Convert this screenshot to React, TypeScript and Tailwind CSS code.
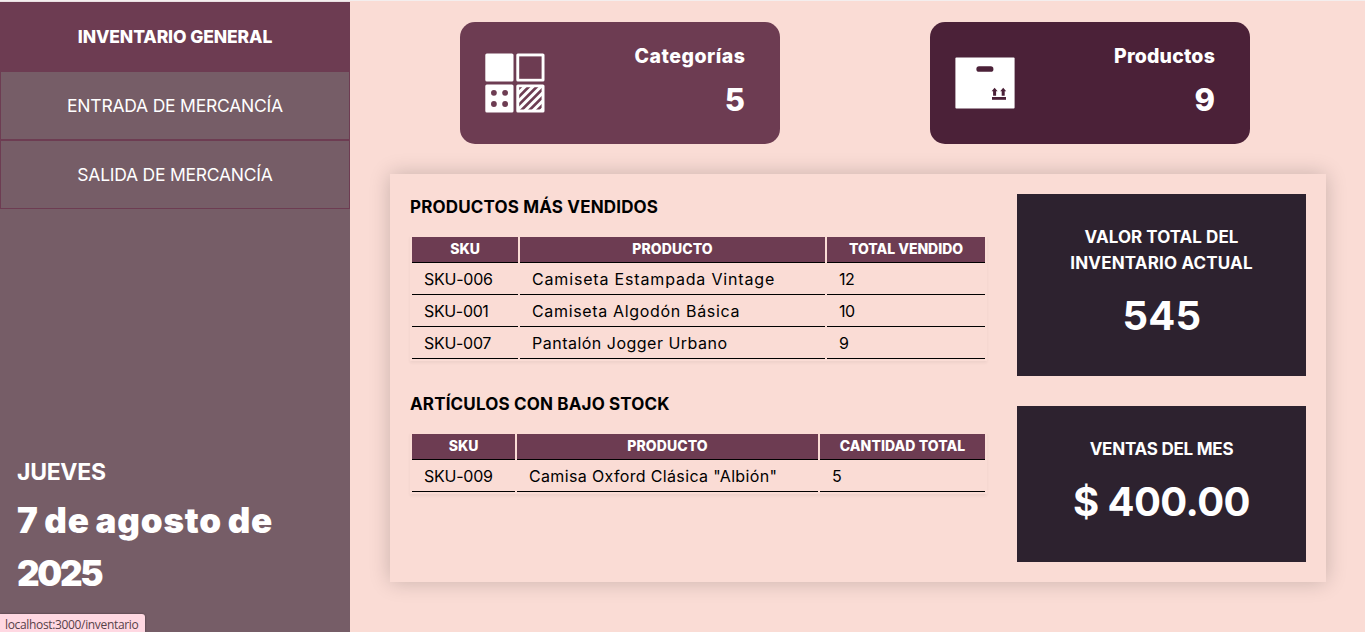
import React from "react";

type Column = { label: string; width: string; tracking: string };
type Cell = { text: string; tracking: string };

function CategoriesIcon() {
  return (
    <svg width="60" height="60" viewBox="0 0 60 60" className="block">
      <defs>
        <clipPath id="striped-tile">
          <rect x="34.2" y="34.2" width="22.4" height="22.4" />
        </clipPath>
      </defs>
      <rect x="0.3" y="0.5" width="28.2" height="28" rx="1.6" fill="#fff" />
      <rect x="31.3" y="0.5" width="28.2" height="28" rx="1.6" fill="#fff" />
      <rect x="34.2" y="3.4" width="22.4" height="22.4" fill="#6d3c52" />
      <rect x="0.3" y="31.5" width="28.2" height="28" rx="1.6" fill="#fff" />
      <g fill="#6d3c52">
        <circle cx="8.9" cy="39.8" r="2.9" />
        <circle cx="20.1" cy="39.8" r="2.9" />
        <circle cx="8.9" cy="51" r="2.9" />
        <circle cx="20.1" cy="51" r="2.9" />
      </g>
      <rect x="31.3" y="31.5" width="28.2" height="28" rx="1.6" fill="#fff" />
      <g clipPath="url(#striped-tile)" stroke="#6d3c52" strokeWidth="2.7">
        <path d="M30 39.4L40 29.4" />
        <path d="M30 47.6L48 29.6" />
        <path d="M30 55.6L56 29.6" />
        <path d="M32 61.6L60 33.6" />
        <path d="M40 61.6L60 41.6" />
        <path d="M48 61.6L60 49.6" />
      </g>
    </svg>
  );
}

function BoxIcon() {
  return (
    <svg width="60" height="60" viewBox="0 0 60 60" className="block">
      <rect x="0.4" y="4.5" width="59.2" height="51" rx="1" fill="#fff" />
      <rect x="21.4" y="13.2" width="17" height="5.6" rx="2.6" fill="#4b2138" />
      <g fill="#4b2138">
        <path d="M39.6 34.7l3 3.6h-1.5v4.5h-3v-4.5h-1.5z" />
        <path d="M48.2 34.7l3 3.6h-1.5v4.5h-3v-4.5h-1.5z" />
        <rect x="37" y="44" width="14" height="2.8" />
      </g>
    </svg>
  );
}

function DataTable({ columns, rows }: { columns: Column[]; rows: Cell[][] }) {
  return (
    <table className="mt-[15px] w-[577px] table-fixed border-separate border-spacing-[2px] shadow-[0_2px_3px_rgba(0,0,0,0.05)]">
      <thead>
        <tr>
          {columns.map((c) => (
            <th
              key={c.label}
              className={`h-[26px] border-b border-black bg-[#6d3c52] px-0 pt-0 pb-[2px] text-center text-[14px] leading-[22px] font-extrabold text-white ${c.width} ${c.tracking}`}
            >
              {c.label}
            </th>
          ))}
        </tr>
      </thead>
      <tbody>
        {rows.map((row) => (
          <tr key={row[0].text}>
            {row.map((cell) => (
              <td
                key={cell.text}
                className={`h-[30px] border-b border-black px-3 py-0 text-[16px] leading-[29px] whitespace-nowrap ${cell.tracking}`}
              >
                {cell.text}
              </td>
            ))}
          </tr>
        ))}
      </tbody>
    </table>
  );
}

const bestSellerColumns: Column[] = [
  { label: "SKU", width: "w-[106px]", tracking: "tracking-[-0.05px]" },
  { label: "PRODUCTO", width: "w-[305px]", tracking: "tracking-[0.08px]" },
  { label: "TOTAL VENDIDO", width: "w-[158px]", tracking: "tracking-[-0.02px]" },
];
const bestSellers: Cell[][] = [
  [
    { text: "SKU-006", tracking: "tracking-[-0.24px]" },
    { text: "Camiseta Estampada Vintage", tracking: "tracking-[0.83px]" },
    { text: "12", tracking: "tracking-[-0.5px]" },
  ],
  [
    { text: "SKU-001", tracking: "tracking-[-0.35px]" },
    { text: "Camiseta Algodón Básica", tracking: "tracking-[0.66px]" },
    { text: "10", tracking: "tracking-[-0.5px]" },
  ],
  [
    { text: "SKU-007", tracking: "tracking-[-0.3px]" },
    { text: "Pantalón Jogger Urbano", tracking: "tracking-[0.49px]" },
    { text: "9", tracking: "tracking-normal" },
  ],
];

const lowStockColumns: Column[] = [
  { label: "SKU", width: "w-[103px]", tracking: "tracking-[-0.05px]" },
  { label: "PRODUCTO", width: "w-[301px]", tracking: "tracking-[0.08px]" },
  { label: "CANTIDAD TOTAL", width: "w-[165px]", tracking: "tracking-[0.06px]" },
];
const lowStock: Cell[][] = [
  [
    { text: "SKU-009", tracking: "tracking-[-0.24px]" },
    { text: 'Camisa Oxford Clásica "Albión"', tracking: "tracking-[0.35px]" },
    { text: "5", tracking: "tracking-normal" },
  ],
];

export default function App() {
  return (
    <div className="relative flex h-[632px] w-[1365px] flex-col overflow-hidden bg-[#fadcd5] font-['Inter',sans-serif] text-black">
      <div className="h-px shrink-0 bg-[#f4eeee]" />
      <div className="flex min-h-0 flex-1">
        <aside className="flex w-[350px] shrink-0 flex-col border-t border-[#e9dfe2] bg-[#765d67] text-white">
          <nav className="flex flex-col text-center text-[17.5px]">
            <a className="flex h-[69px] items-center justify-center bg-[#6d3c52] pt-[2px] font-extrabold tracking-[-0.11px]">
              INVENTARIO GENERAL
            </a>
            <a className="flex h-[69px] items-center justify-center border border-[#6d3c52] pt-[2px] tracking-[-0.22px]">
              ENTRADA DE MERCANCÍA
            </a>
            <a className="flex h-[69px] items-center justify-center border border-[#6d3c52] pt-[2px] tracking-[-0.24px]">
              SALIDA DE MERCANCÍA
            </a>
          </nav>
          <div className="mt-auto pb-[32px] pl-[17px]">
            <p className="text-[23px] leading-[36px] font-bold tracking-[-0.3px]">JUEVES</p>
            <p className="mt-[4px] text-[35px] leading-[53px] font-black tracking-[0.85px] [word-spacing:-2.2px]">
              7 de agosto de
              <br />
              <span className="tracking-[-2.3px]">2025</span>
            </p>
          </div>
        </aside>

        <main className="flex flex-1 flex-col pt-[21px] pl-10">
          <div className="flex gap-[150px] pl-[70px] text-white">
            <section className="flex h-[122px] w-[320px] items-center justify-between rounded-[15px] bg-[#6d3c52] pr-[35px] pl-[25px]">
              <CategoriesIcon />
              <div className="text-right font-extrabold">
                <h2 className="-mr-[0.5px] text-[19.5px] leading-[30px] tracking-[0.5px]">Categorías</h2>
                <p className="mt-[4px] text-[31px] leading-[50px]">5</p>
              </div>
            </section>
            <section className="flex h-[122px] w-[320px] items-center justify-between rounded-[15px] bg-[#4b2138] pr-[35px] pl-[25px]">
              <BoxIcon />
              <div className="text-right font-extrabold">
                <h2 className="text-[19.5px] leading-[30px] tracking-[0.18px]">Productos</h2>
                <p className="mt-[4px] text-[31px] leading-[50px]">9</p>
              </div>
            </section>
          </div>

          <div className="mt-[30px] flex h-[408px] w-[936px] justify-between p-5 shadow-[0_0_20px_rgba(0,0,0,0.2)]">
            <div>
              <h3 className="text-[17px] leading-[26px] font-bold tracking-[0.16px]">
                PRODUCTOS MÁS VENDIDOS
              </h3>
              <DataTable columns={bestSellerColumns} rows={bestSellers} />
              <h3 className="mt-[30px] text-[17px] leading-[26px] font-bold tracking-[0.16px]">
                ARTÍCULOS CON BAJO STOCK
              </h3>
              <DataTable columns={lowStockColumns} rows={lowStock} />
            </div>
            <div className="flex w-[289px] flex-col gap-[30px] text-center text-white">
              <section className="h-[182px] bg-[#2d222f] pt-[30px]">
                <h3 className="text-[17px] leading-[26px] font-bold">
                  <span className="tracking-[0.04px]">VALOR TOTAL DEL</span>
                  <br />
                  <span className="tracking-[0.17px]">INVENTARIO ACTUAL</span>
                </h3>
                <p className="mt-[10px] pl-px text-[40px] leading-[60px] font-bold tracking-[0.19px]">545</p>
              </section>
              <section className="h-[156px] bg-[#2d222f] pt-[30px]">
                <h3 className="text-[17px] leading-[26px] font-bold tracking-[-0.23px]">VENTAS DEL MES</h3>
                <p className="mt-[10px] text-[40px] leading-[60px] font-bold tracking-[-0.59px]">$ 400.00</p>
              </section>
            </div>
          </div>
        </main>
      </div>

      <div className="absolute bottom-0 left-0 h-[18px] w-[145px] rounded-tr-[3px] bg-[#ffd8e2] pt-[3px] pl-[5px] font-['Open_Sans',sans-serif] text-[12px] leading-[16px] tracking-[-0.34px] whitespace-nowrap text-[#574148] shadow-[0_0_2px_rgba(0,0,0,0.5)]">
        localhost:3000/inventario
      </div>
    </div>
  );
}
